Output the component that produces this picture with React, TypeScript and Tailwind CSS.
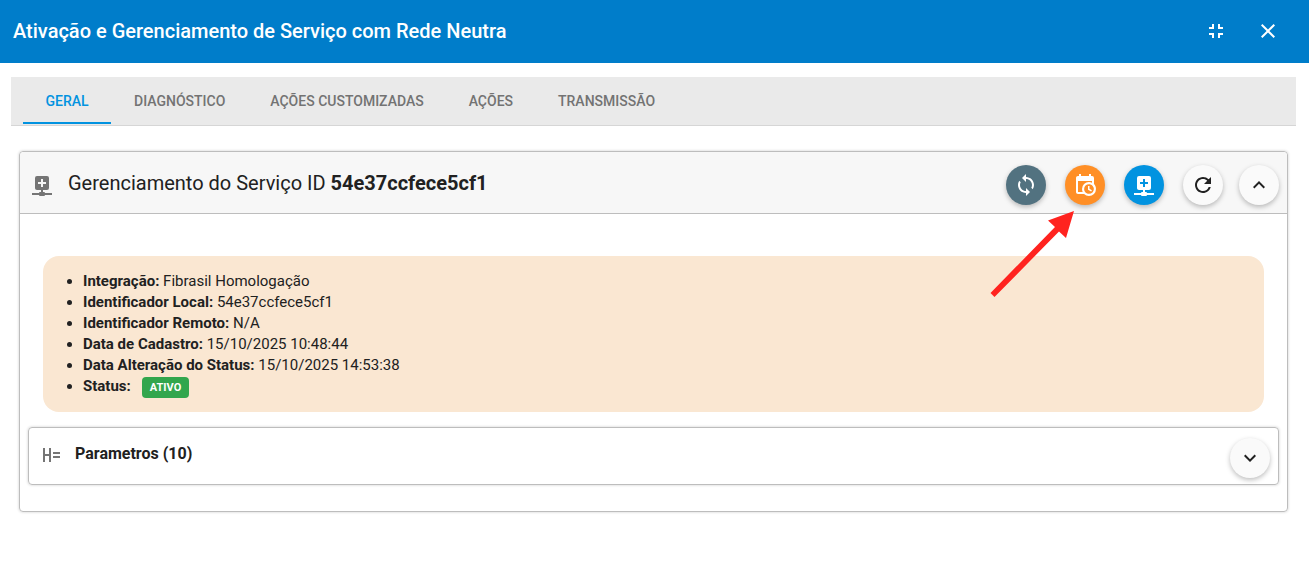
import type { ReactNode } from "react";
import {
  MdClose,
  MdFullscreenExit,
  MdKeyboardArrowDown,
  MdKeyboardArrowUp,
  MdRefresh,
  MdSync,
} from "react-icons/md";

const TABS = ["Geral", "Diagnóstico", "Ações customizadas", "Ações", "Transmissão"];

const DETAILS = [
  { label: "Integração", value: "Fibrasil Homologação" },
  { label: "Identificador Local", value: "54e37ccfece5cf1" },
  { label: "Identificador Remoto", value: "N/A" },
  { label: "Data de Cadastro", value: "15/10/2025 10:48:44" },
  { label: "Data Alteração do Status", value: "15/10/2025 14:53:38" },
];

// mdi icons that react-icons/md does not ship
const PLUS_NETWORK =
  "M16,11V9H13V6H11V9H8V11H11V14H13V11H16M17,3A2,2 0 0,1 19,5V15A2,2 0 0,1 17,17H13V19H14A1,1 0 0,1 15,20H22V22H15A1,1 0 0,1 14,23H10A1,1 0 0,1 9,22H2V20H9A1,1 0 0,1 10,19H11V17H7C5.89,17 5,16.1 5,15V5A2,2 0 0,1 7,3H17Z";
const CALENDAR_CLOCK =
  "M15,13H16.5V15.82L18.94,17.23L18.19,18.53L15,16.69V13M19,8H5V19H9.67C9.24,18.09 9,17.07 9,16A7,7 0 0,1 16,9C17.07,9 18.09,9.24 19,9.67V8M5,21C3.89,21 3,20.1 3,19V5C3,3.89 3.89,3 5,3H6V1H8V3H16V1H18V3H19A2,2 0 0,1 21,5V11.1C22.24,12.36 23,14.09 23,16A7,7 0 0,1 16,23C14.09,23 12.36,22.24 11.1,21H5M16,11.15A4.85,4.85 0 0,0 11.15,16C11.15,18.68 13.32,20.85 16,20.85A4.85,4.85 0 0,0 20.85,16C20.85,13.32 18.68,11.15 16,11.15Z";
const HEADER_EQUAL = "M3,5H5V11H9V5H11V19H9V13H5V19H3V5M13,9H20V11H13V9M13,13H20V15H13V13Z";

function Icon({ path }: { path: string }) {
  return (
    <svg viewBox="0 0 24 24" className="size-6 shrink-0 fill-current" aria-hidden="true">
      <path d={path} />
    </svg>
  );
}

function RoundButton({ label, className, children }: { label: string; className: string; children: ReactNode }) {
  return (
    <button
      type="button"
      aria-label={label}
      className={`flex size-10 shrink-0 items-center justify-center rounded-full shadow-[0_2px_5px_rgba(0,0,0,0.26)] ${className}`}
    >
      {children}
    </button>
  );
}

export default function App() {
  return (
    <div className="min-h-screen bg-white font-[Roboto,sans-serif] text-[#212121]">
      <header className="flex h-[63px] items-center bg-[#007dca] pr-[29px] pb-[2px] pl-[13px] text-white">
        <h1 className="flex-1 text-xl font-medium">Ativação e Gerenciamento de Serviço com Rede Neutra</h1>
        <div className="flex gap-7">
          <button type="button" aria-label="Sair da tela cheia">
            <MdFullscreenExit size={24} />
          </button>
          <button type="button" aria-label="Fechar">
            <MdClose size={24} />
          </button>
        </div>
      </header>

      <nav
        role="tablist"
        className="mt-[14px] mr-[13px] ml-[11px] flex h-[49px] gap-px border-b border-[#d6d6d6] bg-[#eaeaea] pl-3"
      >
        {TABS.map((tab, index) => (
          <button
            key={tab}
            type="button"
            role="tab"
            aria-selected={index === 0}
            className={`mb-px min-w-[88px] border-b-2 px-[22px] pt-[2px] text-sm font-medium uppercase ${
              index === 0 ? "border-[#0293e0] text-[#0293e0]" : "border-transparent text-[#737373]"
            }`}
          >
            {tab}
          </button>
        ))}
      </nav>

      <main className="mt-[25px] mr-[21px] ml-[19px] rounded border border-[#bdbdbd] pb-[26px] shadow-[0_0_3px_rgba(0,0,0,0.2)]">
        <div className="flex h-[62px] items-center rounded-t border-b border-[#bdbdbd] bg-[#f7f7f7] pr-2 pl-[10px]">
          <span className="mt-1 text-[#757575]">
            <Icon path={PLUS_NETWORK} />
          </span>
          <h2 className="ml-[14px] flex-1 text-xl">
            Gerenciamento do Serviço ID <b className="font-bold">54e37ccfece5cf1</b>
          </h2>
          <div className="relative mt-1 flex gap-4">
            <div className="flex gap-[19px]">
              <RoundButton label="Sincronizar" className="bg-[#527280] text-white">
                <MdSync size={24} />
              </RoundButton>
              <RoundButton label="Agendamento" className="bg-[#ff8f26] text-white">
                <Icon path={CALENDAR_CLOCK} />
              </RoundButton>
              <RoundButton label="Adicionar serviço" className="bg-[#0293e0] text-white">
                <Icon path={PLUS_NETWORK} />
              </RoundButton>
              <RoundButton label="Atualizar" className="bg-[#fafafa]">
                <MdRefresh size={24} />
              </RoundButton>
            </div>
            <RoundButton label="Recolher" className="bg-[#fafafa]">
              <MdKeyboardArrowUp size={24} />
            </RoundButton>
            {/* pointer to the scheduling button */}
            <svg
              viewBox="0 0 84 86"
              className="pointer-events-none absolute top-[46px] -left-4 h-[86px] w-[84px] fill-[#ff231f]"
              aria-hidden="true"
            >
              <path d="M84 0L58 9.500L65 16L0.500 82L4.500 86L69 20.500L76 27Z" />
            </svg>
          </div>
        </div>

        <section className="mt-[42px] mr-[23px] ml-[23px] rounded-2xl bg-[#fae7d2] pt-[15px] pb-[14px] pl-10 text-[15px] leading-[21px]">
          <ul className="list-disc">
            {DETAILS.map(({ label, value }) => (
              <li key={label}>
                <b className="font-bold">{label}:</b> {value}
              </li>
            ))}
            <li>
              <b className="font-bold">Status:</b>
              <span className="ml-[11px] inline-block rounded bg-[#32a64d] px-2 text-[11px] font-bold text-white">
                ATIVO
              </span>
            </li>
          </ul>
        </section>

        <section className="mx-2 mt-[15px] flex h-[58px] items-center rounded border border-[#bdbdbd] pr-2 pb-1 pl-[11px] shadow-[0_0_3px_rgba(0,0,0,0.2)]">
          <span className="mt-[2px] text-[#757575]">
            <Icon path={HEADER_EQUAL} />
          </span>
          <h3 className="ml-[11px] flex-1 text-base font-bold">Parametros (10)</h3>
          <RoundButton label="Expandir" className="mt-2 bg-[#fafafa]">
            <MdKeyboardArrowDown size={24} />
          </RoundButton>
        </section>
      </main>
    </div>
  );
}
